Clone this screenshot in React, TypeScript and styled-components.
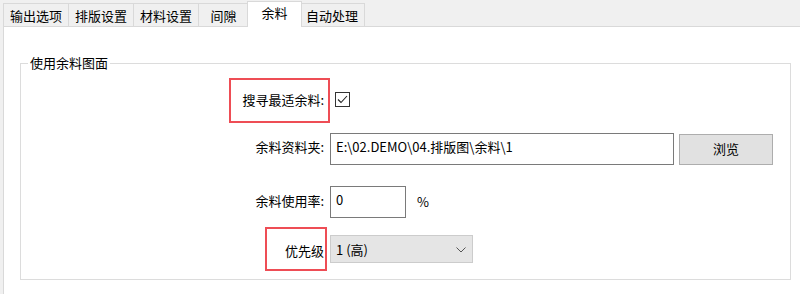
import React from "react";
import styled, { createGlobalStyle } from "styled-components";

const Global = createGlobalStyle`
  html, body { margin: 0; padding: 0; background: #f0f0f0; }
  * { box-sizing: border-box; }
`;

const Window = styled.div`
  width: 800px;
  height: 294px;
  background: #f0f0f0;
  padding-left: 3px;
  display: flex;
  flex-direction: column;
  overflow: hidden;
  font-family: "Noto Sans CJK SC", "Noto Sans", sans-serif;
  font-size: 13px;
  color: #000;
`;

const TabStrip = styled.div`
  display: flex;
  align-items: flex-end;
  height: 27px;
  margin-bottom: -1px;
  position: relative;
  z-index: 1;
`;

const Tab = styled.div<{ $active?: boolean }>`
  display: flex;
  justify-content: center;
  align-items: ${(p) => (p.$active ? "flex-start" : "center")};
  min-width: ${(p) => (p.$active ? "55px" : "51px")};
  height: ${(p) => (p.$active ? "26px" : "23px")};
  padding: ${(p) => (p.$active ? "3px 8px 0" : "2px 6px 0")};
  margin: ${(p) => (p.$active ? "0 -2px 0 -2px" : "0 0 1px -1px")};
  line-height: 16px;
  background: ${(p) => (p.$active ? "#ffffff" : "#f0f0f0")};
  border: 1px solid #d9d9d9;
  border-bottom: none;
  position: relative;
  z-index: ${(p) => (p.$active ? 2 : 1)};
  white-space: nowrap;
  &:first-child { margin-left: 0; }
`;

const Panel = styled.div`
  flex: 1;
  background: #ffffff;
  border-top: 1px solid #d9d9d9;
  border-left: 1px solid #d9d9d9;
  padding: 28px 0 0 16px;
`;

const Group = styled.fieldset`
  margin: 0;
  width: 771px;
  padding: 0 0 16px 0;
  border: 1px solid #dcdcdc;
  display: flex;
  flex-direction: column;
`;

const Legend = styled.legend`
  margin-left: 7px;
  padding: 0 2px;
  line-height: 16px;
  font-size: 13px;
`;

const Row = styled.div<{ $top: number; $h: number }>`
  display: grid;
  grid-template-columns: 303px 1fr;
  column-gap: 6px;
  align-items: center;
  margin-top: ${(p) => p.$top}px;
  height: ${(p) => p.$h}px;
`;

const LabelCell = styled.div<{ $shift?: number }>`
  position: relative;
  text-align: right;
  line-height: 16px;
  white-space: nowrap;
  transform: translateY(${(p) => p.$shift ?? 0}px);
`;

const Highlight = styled.span<{ $w: number; $top: number; $bottom: number; $right: number }>`
  position: absolute;
  width: ${(p) => p.$w}px;
  top: ${(p) => p.$top}px;
  bottom: ${(p) => p.$bottom}px;
  right: ${(p) => p.$right}px;
  border: 2px solid #ee4d55;
  pointer-events: none;
`;

const Controls = styled.div`
  display: flex;
  align-items: center;
  height: 100%;
`;

const CheckBox = styled.span`
  display: inline-flex;
  align-items: center;
  justify-content: center;
  width: 15px;
  height: 15px;
  margin-left: 5px;
  border: 1px solid #333333;
  background: #ffffff;
`;

const TextBox = styled.div<{ $w: number }>`
  width: ${(p) => p.$w}px;
  height: 100%;
  border: 1px solid #7a7a7a;
  background: #ffffff;
  padding: 5px 5px 0;
  line-height: 16px;
  white-space: nowrap;
  overflow: hidden;
`;

const Button = styled.div`
  width: 94px;
  height: 31px;
  margin-left: 5px;
  background: #e1e1e1;
  border: 1px solid #adadad;
  display: flex;
  align-items: center;
  justify-content: center;
  line-height: 16px;
`;

const Unit = styled.span`
  margin-left: 11px;
  line-height: 16px;
`;

const Select = styled.div`
  width: 143px;
  height: 100%;
  background: #e5e5e5;
  border: 1px solid #cccccc;
  display: flex;
  align-items: center;
  justify-content: space-between;
  padding: 1px 6px 0 5px;
  line-height: 16px;
`;

const Chevron = () => (
  <svg width="10" height="6" viewBox="0 0 10 6">
    <path d="M0.5 0.5 L5 5 L9.5 0.5" fill="none" stroke="#555555" strokeWidth="1" />
  </svg>
);

const Check = () => (
  <svg width="13" height="13" viewBox="0 0 13 13">
    <path d="M2 6.5 L5 9.5 L11 3" fill="none" stroke="#222222" strokeWidth="1.1" />
  </svg>
);

const tabs = ["输出选项", "排版设置", "材料设置", "间隙", "余料", "自动处理"];

export default function App() {
  return (
    <>
      <Global />
      <Window>
        <TabStrip>
          {tabs.map((t) => (
            <Tab key={t} $active={t === "余料"}>
              {t}
            </Tab>
          ))}
        </TabStrip>
        <Panel>
          <Group>
            <Legend>使用余料图面</Legend>
            <Row $top={13} $h={31}>
              <LabelCell>
                搜寻最适余料:
                <Highlight $w={101} $top={-14} $bottom={-15} $right={-6} />
              </LabelCell>
              <Controls>
                <CheckBox>
                  <Check />
                </CheckBox>
              </Controls>
            </Row>
            <Row $top={18} $h={32}>
              <LabelCell $shift={-2}>余料资料夹:</LabelCell>
              <Controls>
                <TextBox $w={344}>E:\02.DEMO\04.排版图\余料\1</TextBox>
                <Button>浏览</Button>
              </Controls>
            </Row>
            <Row $top={21} $h={32}>
              <LabelCell $shift={-1}>余料使用率:</LabelCell>
              <Controls>
                <TextBox $w={76}>0</TextBox>
                <Unit>%</Unit>
              </Controls>
            </Row>
            <Row $top={17} $h={28}>
              <LabelCell $shift={2}>
                优先级
                <Highlight $w={62} $top={-16} $bottom={-12} $right={-3} />
              </LabelCell>
              <Controls>
                <Select>
                  <span>1 (高)</span>
                  <Chevron />
                </Select>
              </Controls>
            </Row>
          </Group>
        </Panel>
      </Window>
    </>
  );
}
